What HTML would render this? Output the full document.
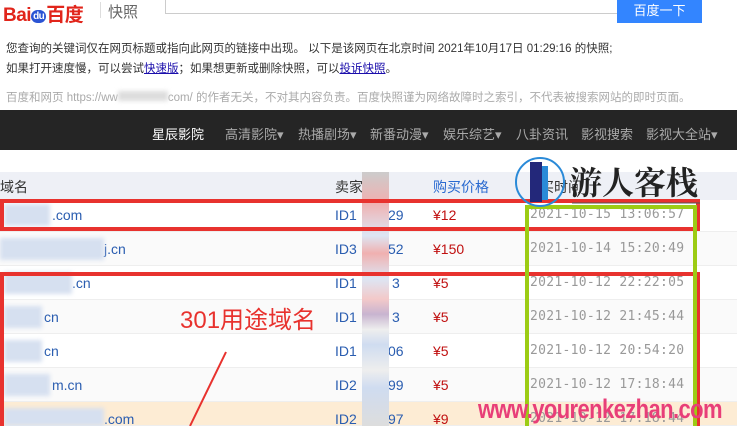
<!DOCTYPE html><html><head><meta charset="utf-8"><style>
*{margin:0;padding:0;box-sizing:border-box}
html,body{width:737px;height:426px;overflow:hidden}
body{background:#fff;font-family:"Liberation Sans","Noto Sans CJK SC",sans-serif;position:relative;color:#333}
.a{position:absolute;white-space:nowrap}
.t{font-size:11.5px;color:#333}
.nav span{position:absolute;top:124px;font-size:13px;color:#aaa}
.row{position:absolute;left:0;width:737px;height:34px;border-bottom:1px solid #eee}
.row span{position:absolute;top:9px;font-size:14px}
.d{color:#2a5db0}.p{color:#c01010}.tm{color:#999;font-family:"DejaVu Sans Mono",monospace;font-size:13px!important;letter-spacing:0.3px}
.blur{position:absolute;background:#d6e0f0;filter:blur(2px)}
</style></head><body>
<div class="a" style="left:3px;top:0;font-size:19px;font-weight:bold;color:#e1251b;letter-spacing:-0.5px">Bai<span style="display:inline-block;background:#2b54d4;color:#fff;font-size:10px;border-radius:8px;padding:1px 2px;vertical-align:2px">du</span>百度</div>
<div class="a" style="left:100px;top:2px;height:16px;border-left:1px solid #ddd"></div>
<div class="a" style="left:108px;top:1px;font-size:15px;color:#666">快照</div>
<div class="a" style="left:165px;top:0;width:452px;height:14px;border:1px solid #ccc;border-top:none;border-right:none"></div>
<div class="a" style="left:617px;top:0;width:85px;height:23px;background:#3385ff;color:#fff;font-size:13px;text-align:center;line-height:22px">百度一下</div>
<div class="a t" style="left:6px;top:40px">您查询的关键词仅在网页标题或指向此网页的链接中出现。 以下是该网页在北京时间 2021年10月17日 01:29:16 的快照;</div>
<div class="a t" style="left:6px;top:60px">如果打开速度慢，可以尝试<u style="color:#1a0dab">快速版</u>；如果想更新或删除快照，可以<u style="color:#1a0dab">投诉快照</u>。</div>
<div class="a t" style="left:6px;top:89px;color:#aaa">百度和网页 https://ww<span style="display:inline-block;width:50px;height:10px;background:#ddd;filter:blur(2px)"></span>com/ 的作者无关，不对其内容负责。百度快照谨为网络故障时之索引，不代表被搜索网站的即时页面。</div>
<div class="a" style="left:0;top:110px;width:737px;height:40px;background:#252525"></div>
<div class="nav"><span style="left:152px;color:#fff">星辰影院</span><span style="left:225px">高清影院▾</span><span style="left:298px">热播剧场▾</span><span style="left:370px">新番动漫▾</span><span style="left:443px">娱乐综艺▾</span><span style="left:516px">八卦资讯</span><span style="left:581px">影视搜索</span><span style="left:646px">影视大全站▾</span></div>
<div class="a" style="left:0;top:172px;width:737px;height:28px;background:#eef0f6"></div>
<div class="a" style="left:0;top:177px;font-size:14px">域名</div>
<div class="a" style="left:335px;top:177px;font-size:14px">卖家</div>
<div class="a" style="left:433px;top:177px;font-size:14px;color:#2a6ad0">购买价格</div>
<div class="a" style="left:540px;top:177px;font-size:14px">买时间</div>
<div class="row" style="top:198px"><span class="d" style="left:52px">.com</span><span class="d" style="left:335px">ID1</span><span class="d" style="left:388px">29</span><span class="p" style="left:433px">¥12</span><span class="tm" style="left:530px">2021-10-15 13:06:57</span></div>
<div class="row" style="top:232px;background:#fafafa"><span class="d" style="left:104px">j.cn</span><span class="d" style="left:335px">ID3</span><span class="d" style="left:388px">52</span><span class="p" style="left:433px">¥150</span><span class="tm" style="left:530px">2021-10-14 15:20:49</span></div>
<div class="row" style="top:266px"><span class="d" style="left:72px">.cn</span><span class="d" style="left:335px">ID1</span><span class="d" style="left:392px">3</span><span class="p" style="left:433px">¥5</span><span class="tm" style="left:530px">2021-10-12 22:22:05</span></div>
<div class="row" style="top:300px;background:#fafafa"><span class="d" style="left:44px">cn</span><span class="d" style="left:335px">ID1</span><span class="d" style="left:392px">3</span><span class="p" style="left:433px">¥5</span><span class="tm" style="left:530px">2021-10-12 21:45:44</span></div>
<div class="row" style="top:334px"><span class="d" style="left:44px">cn</span><span class="d" style="left:335px">ID1</span><span class="d" style="left:388px">06</span><span class="p" style="left:433px">¥5</span><span class="tm" style="left:530px">2021-10-12 20:54:20</span></div>
<div class="row" style="top:368px;background:#fafafa"><span class="d" style="left:52px">m.cn</span><span class="d" style="left:335px">ID2</span><span class="d" style="left:388px">99</span><span class="p" style="left:433px">¥5</span><span class="tm" style="left:530px">2021-10-12 17:18:44</span></div>
<div class="row" style="top:402px;height:24px;background:#fdecd4"><span class="d" style="left:104px">.com</span><span class="d" style="left:335px">ID2</span><span class="d" style="left:388px">97</span><span class="p" style="left:433px">¥9</span><span class="tm" style="left:530px">2021-10-12 17:18:44</span></div>
<div class="blur" style="left:4px;top:204px;width:46px;height:22px"></div>
<div class="blur" style="left:0;top:238px;width:104px;height:22px"></div>
<div class="blur" style="left:4px;top:272px;width:68px;height:22px"></div>
<div class="blur" style="left:4px;top:306px;width:38px;height:22px"></div>
<div class="blur" style="left:4px;top:340px;width:38px;height:22px"></div>
<div class="blur" style="left:4px;top:374px;width:46px;height:22px"></div>
<div class="blur" style="left:4px;top:408px;width:100px;height:18px"></div>
<div class="a" style="left:362px;top:172px;width:27px;height:254px;background:linear-gradient(#ccc,#f0b0b0 12%,#dde6f4 25%,#f0b0b0 32%,#dde6f4 42%,#f3c9c9 50%,#c8b4d0 56%,#eee 62%,#cfdcf0 68%,#eee 78%,#cfdcf0 85%,#ddd)"></div>
<div class="a" style="left:0;top:199px;width:700px;height:32px;border:4px solid #e8322e"></div>
<div class="a" style="left:0;top:272px;width:700px;height:154px;border:4px solid #e8322e;border-bottom:none"></div>
<div class="a" style="left:525px;top:205px;width:172px;height:221px;border:4px solid #9ccc14;border-bottom:none"></div>
<div class="a" style="left:180px;top:300px;font-size:24px;color:#e8322e">301用途域名</div>
<svg class="a" style="left:0;top:0" width="737" height="426"><line x1="226" y1="352" x2="190" y2="426" stroke="#e8322e" stroke-width="2"/><circle cx="540" cy="182" r="24" fill="none" stroke="#2a8ad8" stroke-width="2"/><rect x="530" y="162" width="12" height="40" fill="#23287a"/><rect x="542" y="166" width="6" height="34" fill="#2a8ad8"/><line x1="572" y1="203" x2="700" y2="203" stroke="#555"/></svg>
<div class="a" style="left:570px;top:158px;font-size:32px;font-weight:bold;color:#222;font-family:'Noto Serif CJK SC',serif">游人客栈</div>
<div class="a" style="left:478px;top:394px;font-size:22px;font-weight:bold;color:#e83e78;letter-spacing:-0.6px;transform:scaleY(1.2);transform-origin:left top">www.yourenkezhan.com</div>
</body></html>
